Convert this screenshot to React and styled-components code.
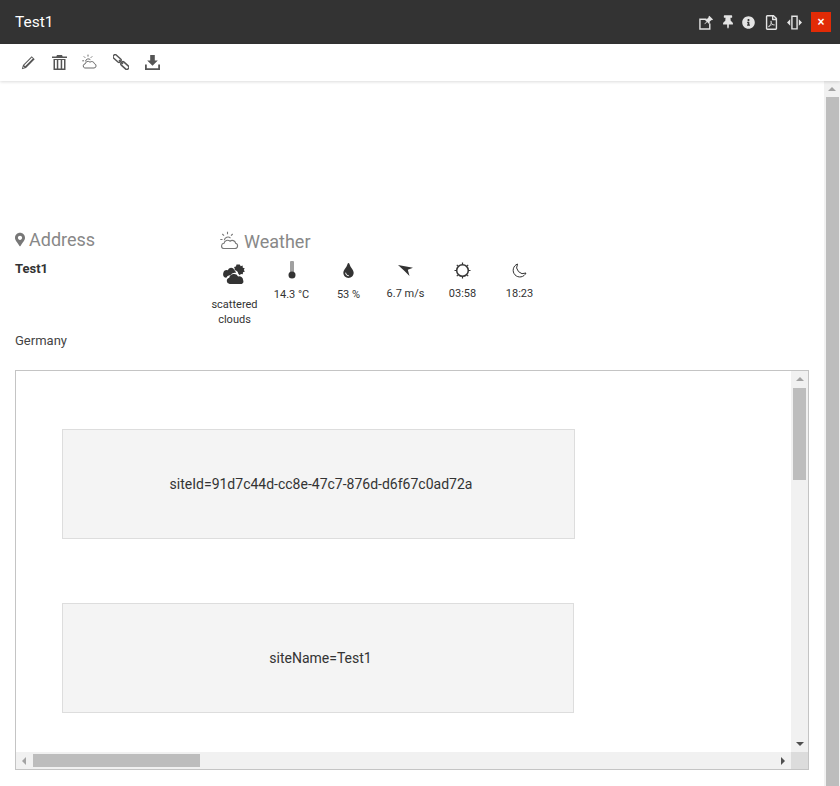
import styled, { createGlobalStyle } from "styled-components";
import { FaInfoCircle, FaMapMarkerAlt, FaRegFilePdf, FaThumbtack, FaTint } from "react-icons/fa";

const GlobalStyle = createGlobalStyle`
  html, body {
    margin: 0;
    height: 100%;
    overflow: hidden;
    background: #fff;
    font-family: Roboto, "Liberation Sans", sans-serif;
  }
`;

const CloudSun = ({ size = 20 }) => (
  <svg width={size} height={size} viewBox="0 0 20 20" fill="none" stroke="currentColor" strokeWidth="1.1">
    <path d="M3.500 17.500h11.500a2.700 2.700 0 0 0 .6-5.300 3.500 3.500 0 0 0-5.600-2 3.600 3.600 0 0 0-6 2.100 2.650 2.650 0 0 0-.5 5.200z" />
    <path d="M4.300 9.300a3.700 3.700 0 0 1 6.200-2.200M7.500 .8v2.400M2.300 3l1.700 1.700M12.700 3L11 4.700M.3 8.500h2.200" />
  </svg>
);

const Clouds = () => (
  <svg width="23" height="21" viewBox="0 0 24 22" fill="currentColor">
    <path d="M17.500 .5l1 1.800 2-.6.2 2.100 2 .6-1 1.800 1.200 1.700-2 .8-.2 2.100-2-.4-1.200 1.400-1.500-1.500a5 5 0 0 0-4-4l.3-1.400-.8-1.800 2-.5.6-2z" />
    <path d="M5 6.500a3.600 3.600 0 0 1 6.800-.2 4 4 0 0 1 1.600 3 5.400 5.400 0 0 0-5.800 2.600 4 4 0 0 0-4.200 2.600A3.900 3.900 0 0 1 5 6.500z" />
    <path d="M7 21a3.300 3.300 0 0 1-.5-6.500 5 5 0 0 1 9.300-1.500 4 4 0 0 1 5.200 3.700A3.400 3.400 0 0 1 19.500 21z" />
  </svg>
);

const Thermometer = () => (
  <svg width="8" height="18" viewBox="0 0 8 18">
    <rect x="2" y="0" width="4" height="12" rx="1" fill="#a0a0a0" />
    <circle cx="4" cy="14" r="3.500" fill="#333" />
  </svg>
);

const WindArrow = () => (
  <svg width="15" height="11" viewBox="0 0 15 11" fill="currentColor">
    <path d="M0 0l15 2.800-5.200 2L11.500 11 6.500 6z" />
  </svg>
);

const SunOutline = () => (
  <svg width="17" height="17" viewBox="0 0 17 17" fill="none" stroke="currentColor">
    <circle cx="8.500" cy="8.500" r="5.800" strokeWidth="1.500" />
    <path d="M8.500 .5v1.500M8.500 15v1.500M.5 8.500H2M15 8.500h1.500M2.800 2.800l1 1M13.200 13.200l1 1M2.800 14.200l1-1M13.200 3.800l1-1" strokeWidth="1.200" />
  </svg>
);

const Moon = () => (
  <svg width="15" height="15" viewBox="0 0 15 15" fill="none" stroke="currentColor" strokeWidth="1">
    <path d="M5.500 1a6.700 6.700 0 1 0 8.500 9A6.500 6.500 0 0 1 5.500 1z" />
  </svg>
);

const Pencil = () => (
  <svg width="15" height="15" viewBox="0 0 15 15" fill="currentColor">
    <path d="M10.700 1.300l3 3L5 13 .8 14.200 2 10z" />
    <path d="M3.200 10.300l7.700-7.700.9.900-7.700 7.700zM2.500 11.500l1 1-1.400.4z" fill="#fff" />
  </svg>
);

const Trash = () => (
  <svg width="15" height="15" viewBox="0 0 15 15" fill="currentColor">
    <path d="M5 0h5l.7 1.500H15V3H0V1.500h4.300z" />
    <path d="M1.500 4h12v11h-12zM3 5v8.500h1.800V5zm3.300 0v8.500h2.400V5zm3.900 0v8.500H12V5z" fillRule="evenodd" />
  </svg>
);

const Chain = () => (
  <svg width="16" height="16" viewBox="0 0 16 16" fill="none" stroke="currentColor" strokeWidth="1.500">
    <rect x="-.4" y="2.400" width="9" height="4" rx="1.500" transform="rotate(42 4 4.400)" />
    <rect x="7.400" y="9.600" width="9" height="4" rx="1.500" transform="rotate(42 11.900 11.600)" />
    <path d="M6 6l4 4" />
  </svg>
);

const DownloadTray = () => (
  <svg width="15" height="15" viewBox="0 0 15 15" fill="currentColor">
    <path d="M5.200 0h4.600v5.500h3L7.500 10.800 2.200 5.500h3z" />
    <path d="M0 9.500h1.800v3.700h11.400V9.500H15V15H0z" />
  </svg>
);

const ExpandPin = () => (
  <svg width="15" height="15" viewBox="0 0 16 16" fill="none">
    <path d="M8 4.500H1v10.500h10.500V9" stroke="currentColor" strokeWidth="1.500" />
    <path d="M11 .8l4 4-1.200.8-.5-.3-2 2 .2 1.500-.8.7-2-2-2.500 2.300-.4-.4L8.100 7 6 5l.8-.8 1.500.2 2-2-.2-.6z" fill="currentColor" />
  </svg>
);

const WidthToggle = () => (
  <svg width="15" height="17" viewBox="0 0 16 17" fill="currentColor">
    <path d="M4.500 1h7v15h-7zM6 2.500v12h4v-12z" fillRule="evenodd" />
    <path d="M3.400 5v7L0 8.500zM12.600 5v7L16 8.500z" />
  </svg>
);

const Page = styled.div`
  width: 840px;
  height: 786px;
  display: flex;
  flex-direction: column;
  overflow: hidden;
`;

const Header = styled.header`
  height: 44px;
  flex: none;
  display: flex;
  align-items: center;
  justify-content: space-between;
  padding: 0 9px 0 15px;
  background: #333;
  color: #fff;
`;

const Title = styled.h1`
  margin: 0;
  font-size: 15.500px;
  font-weight: 400;
`;

const HeaderIcons = styled.div`
  display: flex;
  align-items: center;
  gap: 9.200px;
  color: #e4e4e4;
`;

const HeaderIcon = styled.span`
  display: flex;
  justify-content: center;

  svg {
    display: block;
    width: ${(p) => p.$w}px;
    height: ${(p) => p.$h}px;
  }
`;

const CloseButton = styled.button`
  width: 20px;
  height: 20px;
  padding: 0;
  border: 0;
  background: #e12b06;
  color: #fff;
  font: 700 12px "Liberation Sans", sans-serif;
`;

const Toolbar = styled.div`
  height: 37px;
  box-sizing: border-box;
  flex: none;
  display: flex;
  align-items: center;
  gap: 15px;
  padding: 0 0 1px 20px;
  color: #555;
  background: #fff;
  box-shadow: 0 1px 3px rgba(0, 0, 0, 0.14);
  position: relative;
`;

const ToolIcon = styled.span`
  width: 16px;
  height: 16px;
  display: flex;
  align-items: center;
  justify-content: center;
`;

const Body = styled.div`
  flex: 1;
  min-height: 0;
  display: flex;
`;

const Content = styled.main`
  flex: 1;
  min-width: 0;
  padding: 146px 16px 0 15px;
`;

const InfoRow = styled.section`
  display: flex;
  height: 143px;
`;

const AddressColumn = styled.div`
  width: 191px;
  flex: none;
`;

const SectionTitle = styled.h2`
  margin: 0;
  display: flex;
  align-items: center;
  gap: 4px;
  height: 24px;
  font-size: 18px;
  font-weight: 400;
  color: #888;

  svg {
    color: #777;
  }
`;

const AddressIcon = styled(FaMapMarkerAlt)`
  width: 10px;
  height: 15px;
`;

const SiteName = styled.div`
  margin-top: 10px;
  height: 72px;
  font-size: 13px;
  font-weight: 700;
  color: #333;
`;

const Country = styled.div`
  font-size: 13px;
  color: #444;
`;

const WeatherColumn = styled.div`
  flex: none;
`;

const WeatherTitle = styled(SectionTitle)`
  margin: 2px 0 0 14px;
`;

const WeatherItems = styled.div`
  display: flex;
  margin-top: 5px;
`;

const WeatherItem = styled.div`
  width: 57px;
  display: flex;
  flex-direction: column;
  align-items: center;
  color: #333;
`;

const WeatherIcon = styled.div`
  height: ${(p) => (p.$large ? 33 : 24)}px;
  display: flex;
  align-items: center;
  justify-content: center;
`;

const WeatherValue = styled.div`
  margin-top: ${(p) => p.$top}px;
  font-size: 11px;
  line-height: 15px;
  text-align: center;
`;

const DropIcon = styled(FaTint)`
  width: 11px;
  height: 15px;
`;

const Frame = styled.div`
  width: 792px;
  height: 398px;
  border: 1px solid #c4c4c4;
  display: grid;
  grid-template-columns: 775px 17px;
  grid-template-rows: 381px 17px;
`;

const FrameContent = styled.div`
  padding: 58px 0 0 46px;
  overflow: hidden;
`;

const ParamBox = styled.div`
  box-sizing: border-box;
  width: ${(p) => p.$width}px;
  height: 110px;
  margin-bottom: 64px;
  padding-left: 5px;
  display: flex;
  align-items: center;
  justify-content: center;
  background: #f4f4f4;
  border: 1px solid #ddd;
  font-size: 14px;
  color: #333;
`;

const VerticalBar = styled.div`
  display: flex;
  flex-direction: column;
  align-items: center;
  background: #f1f1f1;
`;

const HorizontalBar = styled.div`
  display: flex;
  align-items: center;
  background: #f1f1f1;
`;

const ScrollCorner = styled.div`
  background: #dcdcdc;
`;

const Arrow = styled.span`
  width: 0;
  height: 0;
  flex: none;
  border-style: solid;
  border-color: transparent;
  ${(p) => p.$dir === "up" && "border-width: 0 4px 4px; border-bottom-color: #a3a3a3;"}
  ${(p) => p.$dir === "down" && "border-width: 4px 4px 0; border-top-color: #505050;"}
  ${(p) => p.$dir === "left" && "border-width: 4px 4px 4px 0; border-right-color: #a3a3a3;"}
  ${(p) => p.$dir === "right" && "border-width: 4px 0 4px 4px; border-left-color: #505050;"}
`;

const VerticalThumb = styled.div`
  width: 13px;
  height: 92px;
  flex: none;
  margin-top: 7px;
  background: #bdbdbd;
`;

const HorizontalThumb = styled.div`
  height: 13px;
  width: 167px;
  margin-left: 7px;
  background: #bdbdbd;
`;

const Spacer = styled.div`
  flex: 1;
`;

const PageScrollbar = styled(VerticalBar)`
  width: 16px;
  flex: none;
  padding-top: 6px;
`;

const PageThumb = styled.div`
  width: 13px;
  flex: 1;
  margin-top: 6px;
  background: #bdbdbd;
`;

const ArrowEnd = styled.span`
  margin: ${(p) => p.$margin};
  display: flex;
`;

const weather = [
  { icon: <Thermometer />, value: "14.3 °C", top: 5 },
  { icon: <DropIcon />, value: "53 %", top: 5 },
  { icon: <WindArrow />, value: "6.7 m/s", top: 4 },
  { icon: <SunOutline />, value: "03:58", top: 4 },
  { icon: <Moon />, value: "18:23", top: 4 },
];

export default function App() {
  return (
    <Page>
      <GlobalStyle />
      <Header>
        <Title>Test1</Title>
        <HeaderIcons>
          <HeaderIcon $w={15} $h={15}><ExpandPin /></HeaderIcon>
          <HeaderIcon $w={10} $h={14}><FaThumbtack /></HeaderIcon>
          <HeaderIcon $w={13} $h={13}><FaInfoCircle /></HeaderIcon>
          <HeaderIcon $w={13} $h={15}><FaRegFilePdf /></HeaderIcon>
          <HeaderIcon $w={15} $h={17}><WidthToggle /></HeaderIcon>
          <CloseButton>×</CloseButton>
        </HeaderIcons>
      </Header>
      <Toolbar>
        <ToolIcon><Pencil /></ToolIcon>
        <ToolIcon><Trash /></ToolIcon>
        <ToolIcon><CloudSun size={16} /></ToolIcon>
        <ToolIcon><Chain /></ToolIcon>
        <ToolIcon><DownloadTray /></ToolIcon>
      </Toolbar>
      <Body>
        <Content>
          <InfoRow>
            <AddressColumn>
              <SectionTitle><AddressIcon />Address</SectionTitle>
              <SiteName>Test1</SiteName>
              <Country>Germany</Country>
            </AddressColumn>
            <WeatherColumn>
              <WeatherTitle><CloudSun size={20} />Weather</WeatherTitle>
              <WeatherItems>
                <WeatherItem>
                  <WeatherIcon $large><Clouds /></WeatherIcon>
                  <WeatherValue $top={6}>scattered<br />clouds</WeatherValue>
                </WeatherItem>
                {weather.map((item) => (
                  <WeatherItem key={item.value}>
                    <WeatherIcon>{item.icon}</WeatherIcon>
                    <WeatherValue $top={item.top}>{item.value}</WeatherValue>
                  </WeatherItem>
                ))}
              </WeatherItems>
            </WeatherColumn>
          </InfoRow>
          <Frame>
            <FrameContent>
              <ParamBox $width={513}>siteId=91d7c44d-cc8e-47c7-876d-d6f67c0ad72a</ParamBox>
              <ParamBox $width={512}>siteName=Test1</ParamBox>
            </FrameContent>
            <VerticalBar>
              <ArrowEnd $margin="6px 0 0"><Arrow $dir="up" /></ArrowEnd>
              <VerticalThumb />
              <Spacer />
              <ArrowEnd $margin="0 0 6px"><Arrow $dir="down" /></ArrowEnd>
            </VerticalBar>
            <HorizontalBar>
              <ArrowEnd $margin="0 0 0 6px"><Arrow $dir="left" /></ArrowEnd>
              <HorizontalThumb />
              <Spacer />
              <ArrowEnd $margin="0 6px 0 0"><Arrow $dir="right" /></ArrowEnd>
            </HorizontalBar>
            <ScrollCorner />
          </Frame>
        </Content>
        <PageScrollbar>
          <Arrow $dir="up" />
          <PageThumb />
        </PageScrollbar>
      </Body>
    </Page>
  );
}
